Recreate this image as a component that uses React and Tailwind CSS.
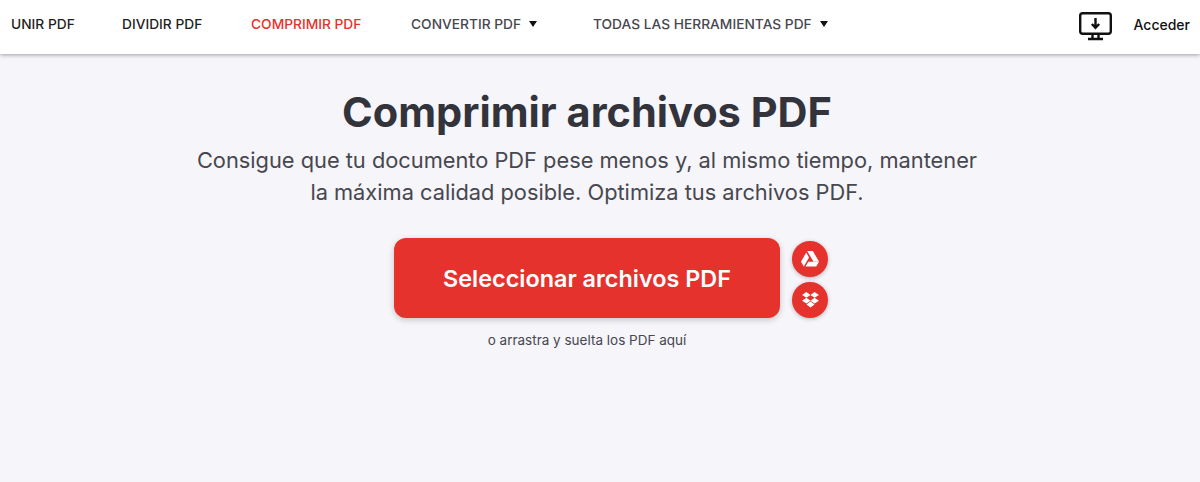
function Caret() {
  return <span className="ml-[8px] w-0 h-0 border-l-[4.5px] border-r-[4.5px] border-t-[6px] border-l-transparent border-r-transparent border-t-[#111111] inline-block" />;
}
export default function App() {
  return (
    <div className="w-[1200px] h-[482px] bg-[#f5f5fa] overflow-hidden font-['Inter',sans-serif]">
      <header className="h-[54px] bg-white flex items-center pl-[11px] pr-[10px] pb-[6px] shadow-[0_1px_4px_rgba(0,0,0,0.35)] text-[13.75px] font-medium text-[#1f1f24]">
        <a className="w-[111px]">UNIR PDF</a>
        <a className="w-[129px]">DIVIDIR PDF</a>
        <a className="w-[160px] text-[#e5322d]">COMPRIMIR PDF</a>
        <a className="w-[182px] flex items-center text-[#47474f]">CONVERTIR PDF<Caret /></a>
        <a className="flex items-center text-[#47474f]">TODAS LAS HERRAMIENTAS PDF<Caret /></a>
        <div className="ml-auto flex items-center gap-[22px]">
          <svg width="33" height="30" viewBox="0 0 33 30" fill="none" stroke="#111" strokeWidth="2.4" className="mt-[6px]">
            <rect x="1.2" y="1.2" width="30.6" height="20.6" rx="2.5" />
            <path d="M16.5 6v9.5M12.8 12l3.7 3.7 3.7-3.7" />
            <path d="M9 27h15M13.5 22v5M19.5 22v5" />
          </svg>
          <span className="text-[#111] text-[14px]">Acceder</span>
        </div>
      </header>
      <main className="flex flex-col items-center pr-[26px]">
        <h1 className="mt-[28px] text-[41.5px] leading-[60px] font-bold text-[#33333b]">Comprimir archivos PDF</h1>
        <p className="mt-[2px] w-[800px] text-center text-[21.8px] leading-[32px] font-normal text-[#47474f]">Consigue que tu documento PDF pese menos y, al mismo tiempo, mantener la máxima calidad posible. Optimiza tus archivos PDF.</p>
        <div className="mt-[30px] ml-[394px] self-start flex items-start gap-[12px]">
          <button className="w-[386px] h-[80px] rounded-xl bg-[#e5322d] text-white text-[23.4px] font-semibold pt-[2px] shadow-[0_2px_6px_rgba(0,0,0,0.2)]">Seleccionar archivos PDF</button>
          <div className="mt-[3px] flex flex-col gap-[5px]">
            <span className="w-9 h-9 rounded-full bg-[#e5322d] shadow-[0_1px_4px_rgba(0,0,0,0.25)] flex items-center justify-center">
              <svg width="18" height="16" viewBox="0 0 18 16" fill="white"><path d="M6.2 0h5.6L18 10.6h-5.6zM5.2 1.6 8 6.5 2.8 15.6 0 10.7zM4.5 15.6l2.8-4.9H18l-2.8 4.9z" /></svg>
            </span>
            <span className="w-9 h-9 rounded-full bg-[#e5322d] shadow-[0_1px_4px_rgba(0,0,0,0.25)] flex items-center justify-center">
              <svg width="17" height="16" viewBox="0 0 18 17" fill="white"><path d="M4.7 0 0 3.1l4.7 3L9 3.1zM13.3 0 9 3.1l4.3 3L18 3.1zM0 9.2l4.7 3.1L9 9.2l-4.3-3.1zM13.3 6.1 9 9.2l4.3 3.1L18 9.2zM4.7 13.3 9 16.4l4.3-3.1L9 10.2z" /></svg>
            </span>
          </div>
        </div>
        <p className="mt-[12px] text-[13.5px] leading-[20px] text-[#47474f]">o arrastra y suelta los PDF aquí</p>
      </main>
    </div>
  );
}
